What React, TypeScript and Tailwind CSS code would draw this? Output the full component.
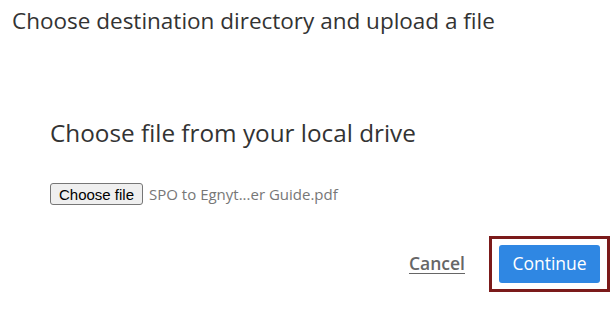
export default function App() {
  return (
    <div className="w-[614px] h-[329px] bg-white font-['Open_Sans',sans-serif] overflow-hidden">
      <h1 className="pt-[6px] pl-[12px] text-[22.5px] leading-[30px] text-[#333]">
        Choose destination directory and upload a file
      </h1>

      <div className="pl-[50px] pt-[81px]">
        <h2 className="text-[24.3px] leading-[32px] text-[#333]">Choose file from your local drive</h2>

        <div className="mt-[34px] flex items-center gap-[6px]">
          <button className="h-[22px] px-[8px] bg-[#efefef] border border-[#767676] rounded-[3px] text-[15px] leading-none text-black font-['Liberation_Sans',Arial,sans-serif]">
            Choose file
          </button>
          <span className="text-[15px] text-[#777]">SPO to Egnyt...er Guide.pdf</span>
        </div>
      </div>

      <div className="mt-[30px] pr-[4px] flex items-center justify-end gap-[24px]">
        <a className="text-[17.5px] font-semibold text-[#666] underline underline-offset-[3px]">Cancel</a>
        <div className="border-[3px] border-[#7b1a1a] px-[7px] py-[6px]">
          <button className="w-[101px] h-[38px] rounded-[3px] bg-[#2f87e3] text-white text-[17.5px]">
            Continue
          </button>
        </div>
      </div>
    </div>
  );
}
